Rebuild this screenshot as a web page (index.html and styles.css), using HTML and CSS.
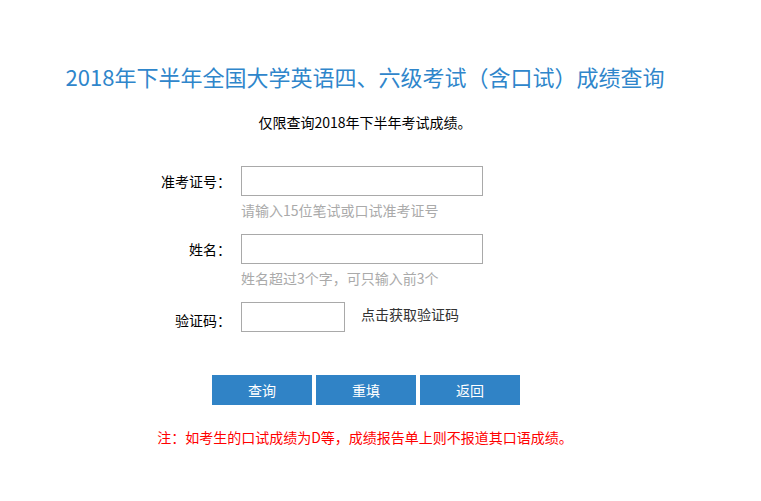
FILE: index.html
```html
<!DOCTYPE html>
<html lang="zh-CN">
<head>
<meta charset="utf-8">
<title>2018年下半年全国大学英语四、六级考试（含口试）成绩查询</title>
<link rel="stylesheet" href="styles.css">
</head>
<body>
<div class="page">
  <h1 class="title">2018年下半年全国大学英语四、六级考试（含口试）成绩查询</h1>
  <p class="subtitle">仅限查询2018年下半年考试成绩。</p>
  <form class="form">
    <div class="row">
      <label class="label">准考证号：</label>
      <div class="field">
        <input class="input" type="text">
        <div class="hint">请输入15位笔试或口试准考证号</div>
      </div>
    </div>
    <div class="row">
      <label class="label">姓名：</label>
      <div class="field">
        <input class="input" type="text">
        <div class="hint">姓名超过3个字，可只输入前3个</div>
      </div>
    </div>
    <div class="row">
      <label class="label label-low">验证码：</label>
      <div class="field field-inline">
        <input class="input input-short" type="text">
        <span class="captcha">点击获取验证码</span>
      </div>
    </div>
    <div class="buttons">
      <button class="btn" type="button">查询</button>
      <button class="btn" type="button">重填</button>
      <button class="btn" type="button">返回</button>
    </div>
  </form>
  <p class="note">注：如考生的口试成绩为D等，成绩报告单上则不报道其口语成绩。</p>
</div>
</body>
</html>
```
FILE: styles.css
```css
html, body {
  margin: 0;
  padding: 0;
  background: #ffffff;
}
body {
  font-family: "Noto Sans CJK SC", "Noto Sans", sans-serif;
  font-size: 14px;
  color: #000;
}
.page {
  width: 730px;
  padding-top: 61px;
}
.title {
  margin: 0;
  font-size: 22px;
  line-height: 30px;
  font-weight: normal;
  color: #2f86cb;
  text-align: center;
  letter-spacing: 0;
}
.subtitle {
  margin: 21px 0 0;
  font-size: 14px;
  line-height: 20px;
  text-align: center;
}
.form {
  margin-top: 34px;
}
.row {
  display: grid;
  grid-template-columns: 231px 1fr;
  column-gap: 10px;
  margin-bottom: 14px;
}
.label {
  text-align: right;
  line-height: 30px;
  height: 30px;
}
.label-low {
  box-sizing: border-box;
  padding-top: 3px;
}
.field {
  display: flex;
  flex-direction: column;
}
.field-inline {
  flex-direction: row;
  align-items: flex-start;
}
.input {
  box-sizing: border-box;
  width: 242px;
  height: 30px;
  margin: 0;
  border: 1px solid #a9a9a9;
  background: #fff;
  font-size: 14px;
  padding: 0 6px;
  outline: none;
}
.input-short {
  width: 104px;
  height: 30px;
}
.captcha {
  margin-left: 16px;
  line-height: 24px;
  color: #333;
}
.hint {
  margin-top: 4px;
  line-height: 20px;
  color: #aaaaaa;
}
.buttons {
  display: flex;
  gap: 4px;
  padding-left: 212px;
  margin-top: 43px;
}
.btn {
  width: 100px;
  height: 30px;
  border: none;
  margin: 0;
  padding: 0;
  background: #3083c6;
  color: #fff;
  font-family: "Noto Sans CJK SC", "Noto Sans", sans-serif;
  font-size: 14px;
  cursor: pointer;
}
.note {
  margin: 22px 0 0;
  line-height: 20px;
  color: #ff0000;
  text-align: center;
}
```
